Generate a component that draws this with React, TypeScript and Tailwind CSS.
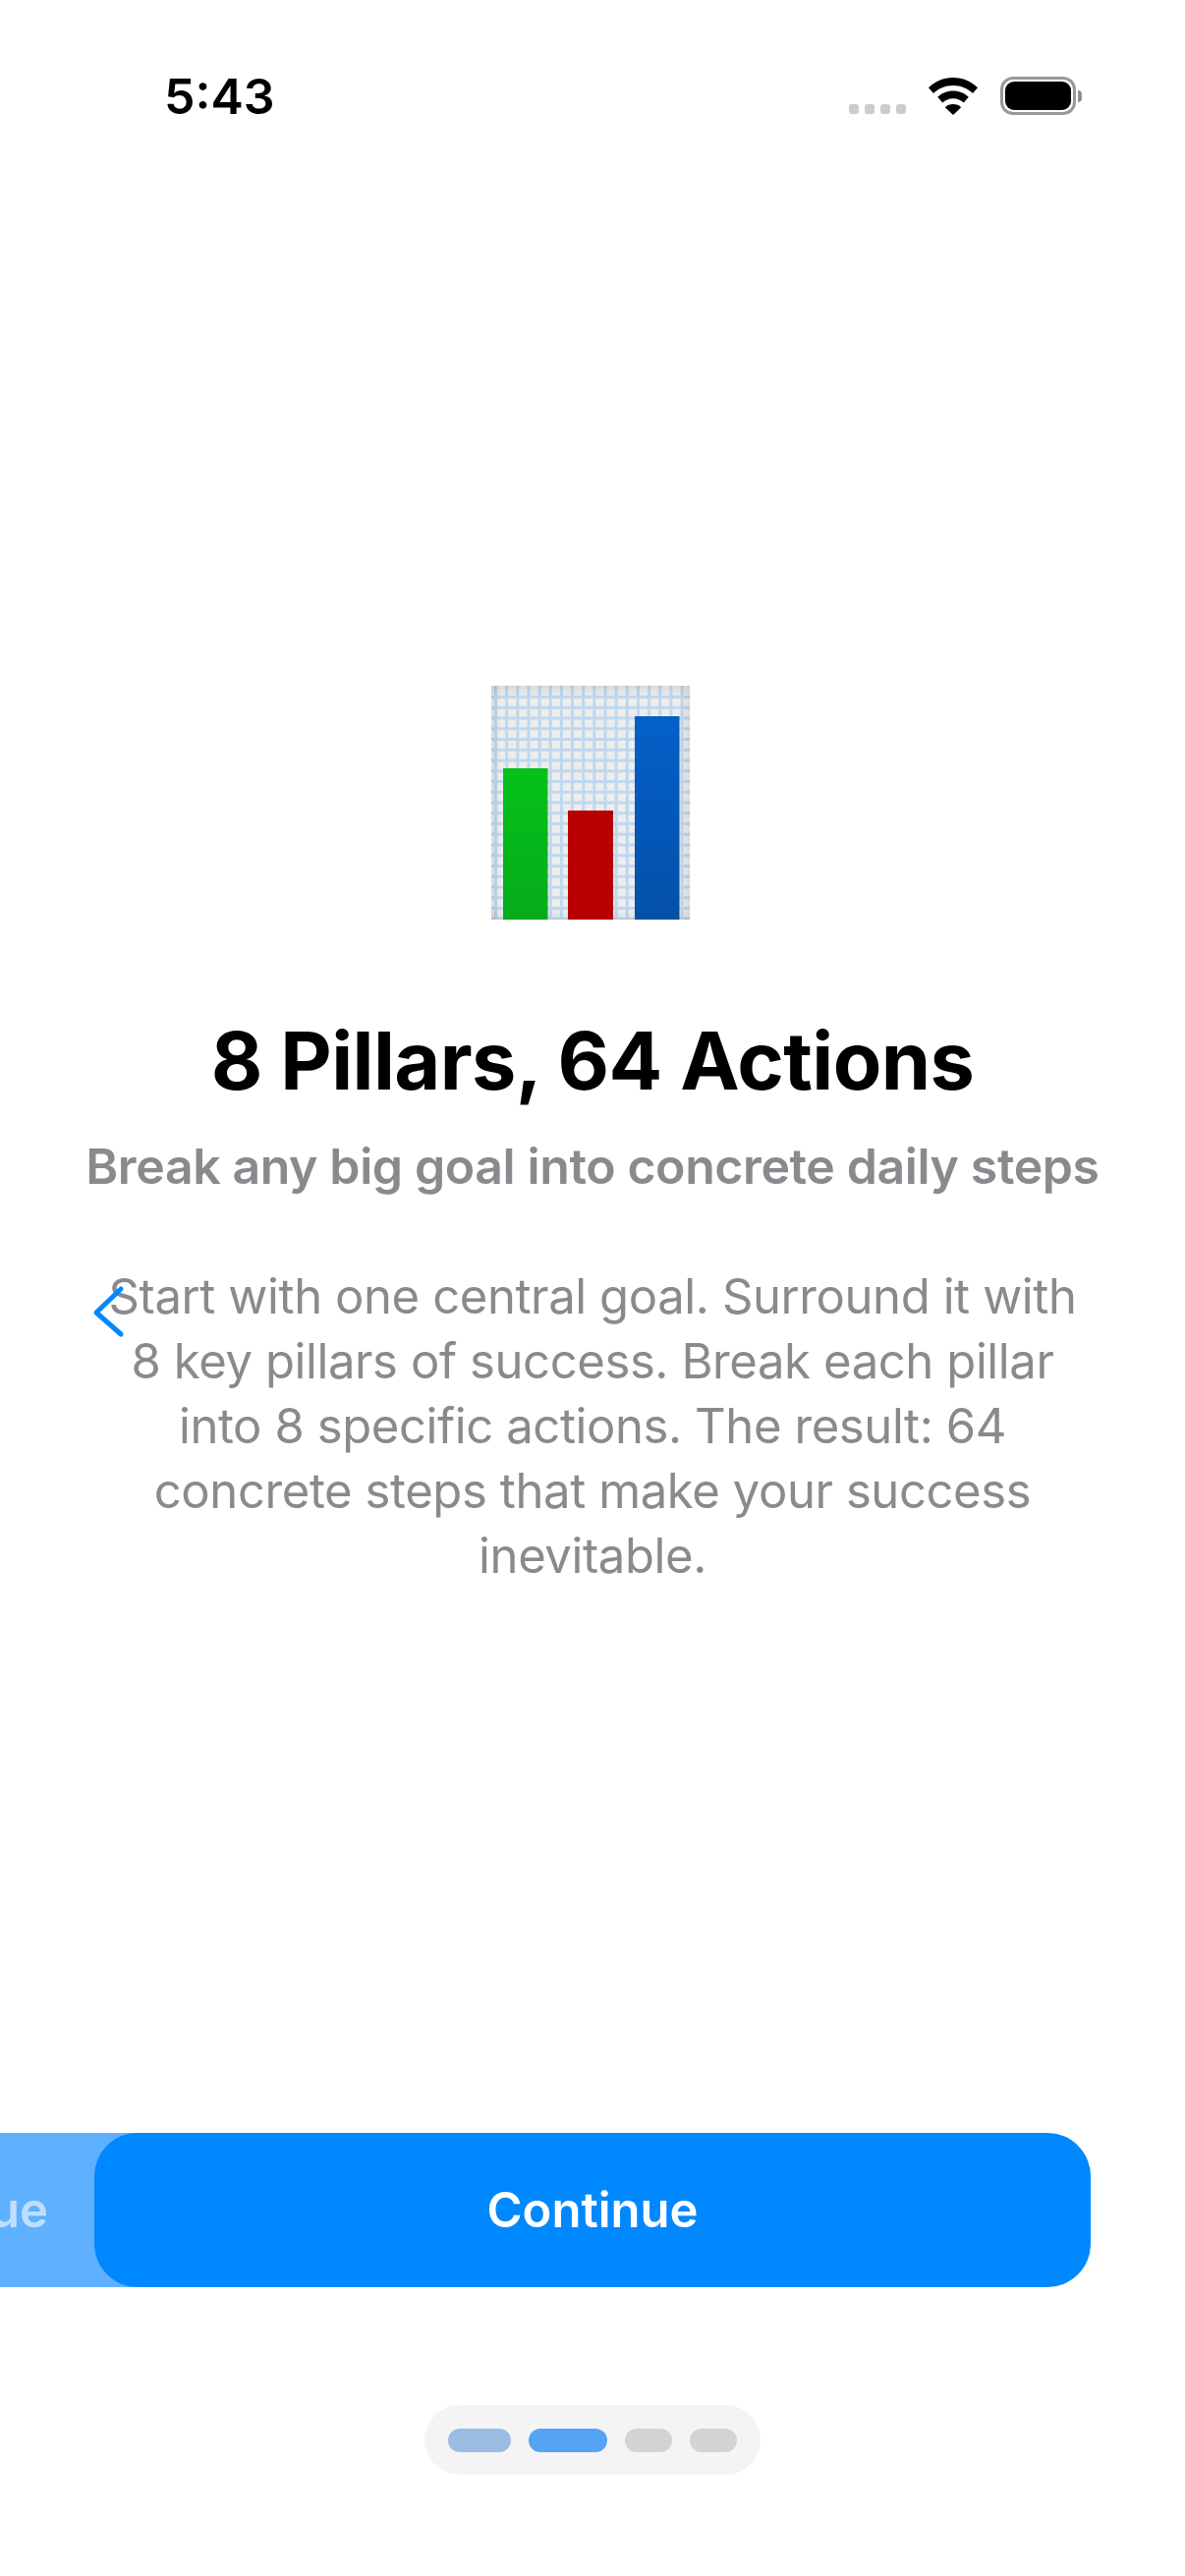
const vLines = Array.from({ length: 18 }, (_, i) => 3 + i * 11.15);
const hLines = Array.from({ length: 22 }, (_, i) => 10 + i * 10.75);

function ChartIcon() {
  return (
    <svg width="202" height="238" viewBox="0 0 202 238" className="mr-[4px] block">
      <defs>
        <linearGradient id="edgeX" x1="0" x2="1" y1="0" y2="0">
          <stop offset="0" stopColor="#000" stopOpacity="0.1" />
          <stop offset="0.05" stopColor="#000" stopOpacity="0.02" />
          <stop offset="0.95" stopColor="#000" stopOpacity="0.02" />
          <stop offset="1" stopColor="#000" stopOpacity="0.1" />
        </linearGradient>
        <linearGradient id="edgeY" x1="0" x2="0" y1="0" y2="1">
          <stop offset="0" stopColor="#000" stopOpacity="0.08" />
          <stop offset="0.05" stopColor="#000" stopOpacity="0" />
          <stop offset="0.95" stopColor="#000" stopOpacity="0" />
          <stop offset="1" stopColor="#000" stopOpacity="0.06" />
        </linearGradient>
        <linearGradient id="blueBar" x1="0" x2="0" y1="0" y2="1">
          <stop offset="0" stopColor="#0460c8" />
          <stop offset="1" stopColor="#0350a8" />
        </linearGradient>
        <linearGradient id="greenBar" x1="0" x2="0" y1="0" y2="1">
          <stop offset="0" stopColor="#06c218" />
          <stop offset="1" stopColor="#04ab1c" />
        </linearGradient>
      </defs>
      <rect width="202" height="238" fill="#f2f2f2" />
      {vLines.map((x) => (
        <rect key={x} x={x} y="0" width="3" height="238" fill="#c4dcf2" />
      ))}
      {hLines.map((y) => (
        <rect key={y} x="0" y={y} width="202" height="3" fill="#c4dcf2" />
      ))}
      <rect width="202" height="238" fill="url(#edgeX)" />
      <rect width="202" height="238" fill="url(#edgeY)" />
      <rect x="12" y="84" width="45.500" height="154" fill="url(#greenBar)" />
      <rect x="78" y="127" width="46" height="111" fill="#b80000" />
      <rect x="146" y="31" width="45.500" height="207" fill="url(#blueBar)" />
    </svg>
  );
}

function Wifi() {
  return (
    <svg width="52" height="38" viewBox="0 0 52 38" className="block">
      <path d="M26 0C16 0 7.500 3.800 1 10.200L6 16C11 11 18 8 26 8s15 3 20 8l5-5.800C44.500 3.800 36 0 26 0Z" fill="#000" />
      <path d="M26 13.500c-6.300 0-11.800 2.400-15.800 6.300l5 5.700c2.800-2.700 6.600-4.300 10.800-4.300s8 1.600 10.800 4.300l5-5.700c-4-3.900-9.500-6.300-15.800-6.300Z" fill="#000" />
      <path d="M26 27c-3.200 0-6.100 1.200-8.200 3.200L26 38l8.200-7.800C32.100 28.200 29.200 27 26 27Z" fill="#000" />
    </svg>
  );
}

function Battery() {
  return (
    <div className="flex items-center">
      <div className="flex h-[39px] w-[77px] items-center justify-center rounded-[13px] border-[3px] border-[#999999] p-[2px]">
        <div className="h-full w-full rounded-[9px] bg-black" />
      </div>
      <div className="ml-[2px] h-[12px] w-[4px] rounded-r-full bg-[#8e8e8e]" />
    </div>
  );
}

export default function App() {
  return (
    <div
      className="relative flex h-[2622px] w-[1206px] flex-col overflow-hidden bg-white"
      style={{ fontFamily: 'Inter, "Liberation Sans", sans-serif' }}
    >
      <div className="flex h-[196px] shrink-0 items-start justify-between pl-[167px] pr-[105px] pt-[68px]">
        <span className="text-[50px] leading-[60px] font-semibold text-black">5:43</span>
        <div className="flex items-start pt-[10px]">
          <div className="mr-[22px] mt-[28px] flex gap-[6px]">
            {[0, 1, 2, 3].map((i) => (
              <div key={i} className="h-[10px] w-[10px] rounded-[3px] bg-[#cccccc]" />
            ))}
          </div>
          <div className="mr-[22px] mt-[1px]">
            <Wifi />
          </div>
          <Battery />
        </div>
      </div>

      <div className="flex flex-col items-center pt-[502px]">
        <ChartIcon />
        <h1 className="mt-[98px] text-[81px] leading-[92px] font-bold tracking-[-0.6px] text-black">
          8 Pillars, 64 Actions
        </h1>
        <p className="mt-[31px] text-[50px] leading-[60px] font-semibold tracking-[-0.4px] text-[#8a8a8e]">
          Break any big goal into concrete daily steps
        </p>
        <p className="mt-[70px] w-[1010px] text-center text-[49px] leading-[66px] tracking-[-0.4px] text-[#8a8a8e]">
          Start with one central goal. Surround it with 8 key pillars of success. Break each pillar into 8 specific
          actions. The result: 64 concrete steps that make your success inevitable.
        </p>
      </div>

      <div className="mt-auto flex flex-col items-center pb-[103px]">
        <button className="relative z-10 flex h-[157px] w-[1014px] items-center justify-center rounded-[44px] bg-[#0088ff] text-[49px] font-semibold text-white">
          Continue
        </button>
        <div className="mt-[120px] flex h-[71px] w-[342px] items-center justify-center gap-[18px] rounded-full bg-[#f4f4f4]">
          <div className="h-[24px] w-[64px] rounded-full bg-[#9bbbe3]" />
          <div className="h-[24px] w-[80px] rounded-full bg-[#55a3f2]" />
          <div className="h-[24px] w-[48px] rounded-full bg-[#d3d3d3]" />
          <div className="h-[24px] w-[48px] rounded-full bg-[#d3d3d3]" />
        </div>
      </div>

      <div className="absolute left-0 top-[2171px] flex h-[157px] w-[140px] items-center justify-end overflow-hidden bg-[#5fb0ff] pr-[91px]">
        <span className="text-[49px] font-semibold whitespace-nowrap text-white/60">ue</span>
      </div>

      <svg width="40" height="60" viewBox="0 0 40 60" className="absolute left-[90px] top-[1306px] z-20">
        <path d="M33 6 8 30l25 22" fill="none" stroke="#0088ff" strokeWidth="5" strokeLinecap="round" strokeLinejoin="round" />
      </svg>
    </div>
  );
}
